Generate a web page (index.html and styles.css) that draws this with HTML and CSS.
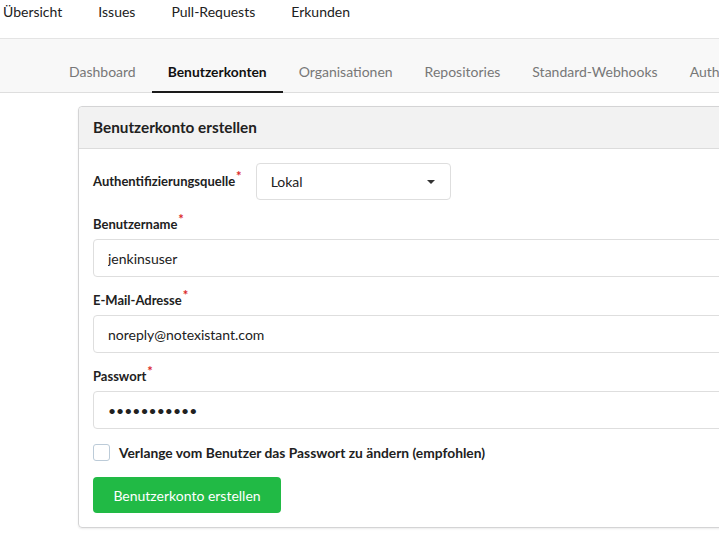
FILE: index.html
```html
<!DOCTYPE html>
<html lang="de">
<head>
<meta charset="utf-8">
<title>Benutzerkonto erstellen</title>
<link rel="stylesheet" href="styles.css">
</head>
<body>
<nav class="topnav">
  <a class="nav-item">Übersicht</a>
  <a class="nav-item">Issues</a>
  <a class="nav-item">Pull-Requests</a>
  <a class="nav-item">Erkunden</a>
</nav>
<div class="tabbar">
  <a class="tab">Dashboard</a>
  <a class="tab active">Benutzerkonten</a>
  <a class="tab">Organisationen</a>
  <a class="tab">Repositories</a>
  <a class="tab">Standard-Webhooks</a>
  <a class="tab">Authentifizierungsquellen</a>
</div>
<main class="content">
  <section class="card">
    <h4 class="card-header">Benutzerkonto erstellen</h4>
    <form class="card-body">
      <div class="inline-field">
        <label class="label required">Authentifizierungsquelle</label>
        <div class="select">
          <span>Lokal</span>
          <span class="caret"></span>
        </div>
      </div>
      <div class="field">
        <label class="label required">Benutzername</label>
        <input class="input" type="text" value="jenkinsuser">
      </div>
      <div class="field">
        <label class="label required">E-Mail-Adresse</label>
        <input class="input" type="text" value="noreply@notexistant.com">
      </div>
      <div class="field">
        <label class="label required">Passwort</label>
        <input class="input" type="password" value="jenkinsuser">
      </div>
      <label class="check">
        <span class="box"></span>
        <span>Verlange vom Benutzer das Passwort zu ändern (empfohlen)</span>
      </label>
      <div class="actions">
        <button class="btn" type="button">Benutzerkonto erstellen</button>
      </div>
    </form>
  </section>
</main>
</body>
</html>
```
FILE: styles.css
```css
* { box-sizing: border-box; }
html, body {
  margin: 0;
  padding: 0;
  overflow: hidden;
  background: #fff;
}
body {
  font-family: Lato, "Noto Sans", sans-serif;
  font-size: 14px;
  color: #212121;
  width: 719px;
  height: 559px;
}
.topnav {
  display: flex;
  height: 39px;
  border-bottom: 1px solid #e4e4e4;
  padding-left: 3px;
  gap: 36px;
  white-space: nowrap;
}
.nav-item {
  font-size: 14px;
  line-height: 18px;
  padding-top: 3px;
  color: #212121;
}
.tabbar {
  display: flex;
  background: #f8f8f8;
  border-bottom: 1px solid #dedede;
  height: 54px;
  padding-left: 53px;
  padding-top: 12px;
  white-space: nowrap;
}
.tab {
  padding: 0 16px;
  height: 42px;
  line-height: 42px;
  font-size: 14px;
  color: #777;
  margin-bottom: -1px;
  flex-shrink: 0;
}
.tab.active {
  color: #111;
  font-weight: 700;
  font-size: 13.85px;
  border-bottom: 2px solid #1b1b1b;
}
.content {
  padding-top: 13px;
  padding-left: 78px;
}
.card {
  width: 1000px;
  border: 1px solid #d4d4d5;
  border-radius: 4px;
  box-shadow: 0 1px 2px rgba(0,0,0,0.08);
}
.card-header {
  margin: 0;
  background: #f2f2f2;
  border-bottom: 1px solid #dcdcdc;
  border-radius: 4px 4px 0 0;
  font-size: 15.3px;
  font-weight: 700;
  line-height: 20px;
  padding: 10px 14px 11px;
  color: #212121;
}
.card-body {
  padding: 14px 14px 14px;
  display: flex;
  flex-direction: column;
}
.inline-field {
  display: flex;
  align-items: center;
  gap: 14px;
  margin-bottom: 16px;
}
.label {
  font-size: 13px;
  font-weight: 700;
  line-height: 17px;
  color: #212121;
}
.required::after {
  content: "*";
  color: #db2828;
  margin-left: 1px;
  font-size: 13px;
  vertical-align: 5px;
  line-height: 0;
}
.select {
  width: 195px;
  height: 37px;
  border: 1px solid #dedede;
  border-radius: 4px;
  display: flex;
  align-items: center;
  justify-content: space-between;
  padding: 0 14px 0 14px;
  font-size: 14px;
  color: #212121;
}
.caret {
  width: 0;
  height: 0;
  border-left: 4px solid transparent;
  border-right: 4px solid transparent;
  border-top: 4px solid #333;
  margin-right: 1px;
}
.field {
  display: flex;
  flex-direction: column;
  margin-bottom: 15px;
}
.field .label {
  margin-bottom: 6px;
}
.input {
  width: 100%;
  height: 38px;
  border: 1px solid #dedede;
  border-radius: 4px;
  padding: 0 14px;
  font-family: Lato, "Noto Sans", sans-serif;
  font-size: 14px;
  color: #212121;
  outline: none;
  background: #fff;
}
.input[type="password"] {
  font-size: 14px;
  letter-spacing: 0;
}
.check {
  display: flex;
  align-items: center;
  gap: 9px;
  font-size: 13.8px;
  font-weight: 700;
  color: #212121;
  height: 17px;
}
.box {
  width: 17px;
  height: 17px;
  border: 1px solid #bccbd8;
  border-radius: 3px;
  background: #fff;
  flex-shrink: 0;
}
.actions {
  margin-top: 16px;
}
.btn {
  background: #21ba45;
  color: #fff;
  border: none;
  border-radius: 4px;
  font-family: Lato, "Noto Sans", sans-serif;
  font-size: 14px;
  height: 36px;
  width: 188px;
  padding: 0;
  cursor: pointer;
}
```
